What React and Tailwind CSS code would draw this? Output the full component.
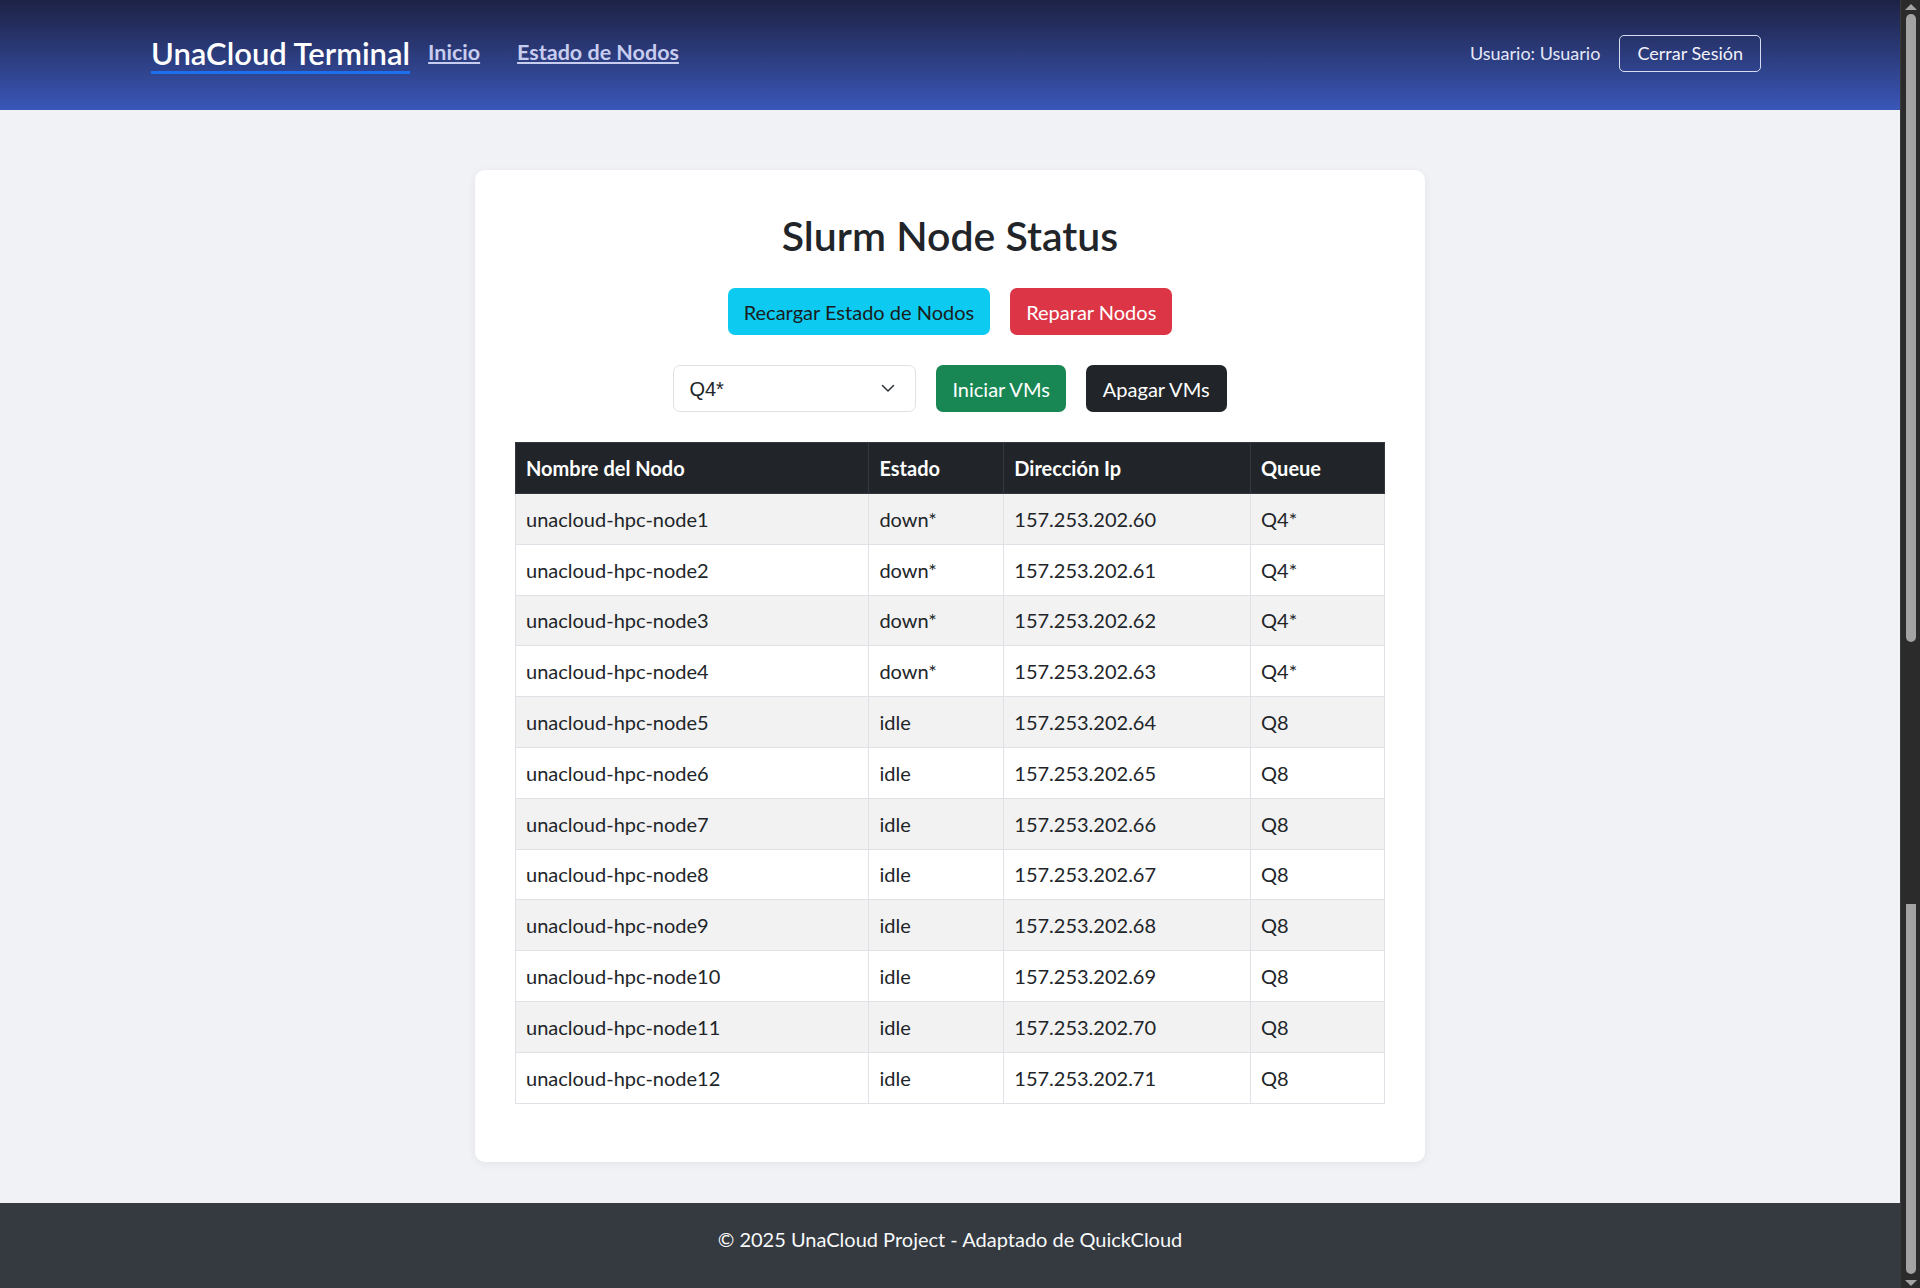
import React, { useState } from "react";

const nodes = [
    { name: "unacloud-hpc-node1", state: "down*", ip: "157.253.202.60", queue: "Q4*" },
    { name: "unacloud-hpc-node2", state: "down*", ip: "157.253.202.61", queue: "Q4*" },
    { name: "unacloud-hpc-node3", state: "down*", ip: "157.253.202.62", queue: "Q4*" },
    { name: "unacloud-hpc-node4", state: "down*", ip: "157.253.202.63", queue: "Q4*" },
    { name: "unacloud-hpc-node5", state: "idle", ip: "157.253.202.64", queue: "Q8" },
    { name: "unacloud-hpc-node6", state: "idle", ip: "157.253.202.65", queue: "Q8" },
    { name: "unacloud-hpc-node7", state: "idle", ip: "157.253.202.66", queue: "Q8" },
    { name: "unacloud-hpc-node8", state: "idle", ip: "157.253.202.67", queue: "Q8" },
    { name: "unacloud-hpc-node9", state: "idle", ip: "157.253.202.68", queue: "Q8" },
    { name: "unacloud-hpc-node10", state: "idle", ip: "157.253.202.69", queue: "Q8" },
    { name: "unacloud-hpc-node11", state: "idle", ip: "157.253.202.70", queue: "Q8" },
    { name: "unacloud-hpc-node12", state: "idle", ip: "157.253.202.71", queue: "Q8" },
];

const App = () => {
    const [queue, setQueue] = useState("Q4*");

    return (
        <div className="flex w-[1920px] h-[1288px] overflow-hidden font-['Segoe_UI','Lato',sans-serif] text-[20px] leading-[30px] text-[#212529]">
            <div className="flex flex-col w-[1900px] bg-[#f0f2f5]">
                {/* Navbar */}
                <header className="h-[110px] shrink-0 bg-gradient-to-b from-[#1d2245] to-[#3a57b9] flex items-center pl-[151px] pr-[139px] pb-[4px]">
                    <a className="text-[31px] leading-[40px] font-semibold text-white underline decoration-[#1e6ff0] decoration-[3px] underline-offset-[6px] mr-[18px]">
                        UnaCloud Terminal
                    </a>
                    <a className="text-[21.5px] font-bold text-[#c8cdf0] underline mr-[37px] -mt-[3px]">Inicio</a>
                    <a className="text-[21.5px] font-bold text-[#c8cdf0] underline -mt-[3px]">Estado de Nodos</a>
                    <div className="ml-auto flex items-center gap-[19px]">
                        <span className="text-[18px] text-[#e4e7f7]">Usuario: Usuario</span>
                        <button className="h-[37px] px-[17px] text-[18px] text-[#f1f2fa] border border-[#d8dcf0] rounded-[5px]">
                            Cerrar Sesión
                        </button>
                    </div>
                </header>

                {/* Main */}
                <main className="flex-1 flex justify-center pt-[60px]">
                    <div className="w-[950px] h-[992px] bg-white rounded-[10px] shadow-[0_2px_10px_rgba(0,0,0,0.06)] px-[40px] pt-[42px]">
                        <h2 className="text-center text-[41px] leading-[48px] font-semibold">Slurm Node Status</h2>

                        <div className="flex justify-center gap-[20px] mt-[28px]">
                            <button className="h-[47px] px-[16px] rounded-[7px] bg-[#0dcaf0] text-[#1a1d20]">
                                Recargar Estado de Nodos
                            </button>
                            <button className="h-[47px] px-[16px] rounded-[7px] bg-[#dc3545] text-white">
                                Reparar Nodos
                            </button>
                        </div>

                        <div className="flex justify-center gap-[20px] mt-[30px]">
                            <div className="relative w-[243px] h-[47px]">
                                <select
                                    value={queue}
                                    onChange={(e) => setQueue(e.target.value)}
                                    className="appearance-none w-full h-full border border-[#dee2e6] rounded-[7px] bg-white pl-[15px] text-[20px] font-['Liberation_Sans',sans-serif] text-[#212529]"
                                >
                                    <option>Q4*</option>
                                    <option>Q8</option>
                                </select>
                                <svg
                                    className="absolute right-[20px] top-[18px] pointer-events-none"
                                    width="16"
                                    height="10"
                                    viewBox="0 0 16 10"
                                    fill="none"
                                    stroke="#343a40"
                                    strokeWidth="1.6"
                                    strokeLinecap="round"
                                    strokeLinejoin="round"
                                >
                                    <path d="M2.5 2.5l5.5 5.5 5.5-5.5" />
                                </svg>
                            </div>
                            <button className="h-[47px] px-[16px] rounded-[7px] bg-[#198754] text-white">Iniciar VMs</button>
                            <button className="h-[47px] px-[17px] rounded-[7px] bg-[#212529] text-white">Apagar VMs</button>
                        </div>

                        {/* Table */}
                        <table className="w-[870px] mt-[30px] border-collapse">
                            <thead className="bg-[#212529] text-white">
                                <tr className="h-[51px]">
                                    <th className="w-[354px] text-left font-bold px-[10px] border border-[#32383e]">Nombre del Nodo</th>
                                    <th className="w-[135px] text-left font-bold px-[10px] border border-[#32383e]">Estado</th>
                                    <th className="w-[247px] text-left font-bold px-[10px] border border-[#32383e]">Dirección Ip</th>
                                    <th className="w-[134px] text-left font-bold px-[10px] border border-[#32383e]">Queue</th>
                                </tr>
                            </thead>
                            <tbody>
                                {nodes.map((n, i) => (
                                    <tr key={n.name} className={`h-[50.8px] ${i % 2 === 0 ? "bg-[#f2f2f2]" : "bg-white"}`}>
                                        <td className="px-[10px] border border-[#dee2e6]">{n.name}</td>
                                        <td className="px-[10px] border border-[#dee2e6]">{n.state}</td>
                                        <td className="px-[10px] border border-[#dee2e6]">{n.ip}</td>
                                        <td className="px-[10px] border border-[#dee2e6]">{n.queue}</td>
                                    </tr>
                                ))}
                            </tbody>
                        </table>
                    </div>
                </main>

                {/* Footer */}
                <footer className="h-[85px] shrink-0 bg-[#343a40] text-[#f8f9fa] text-center pt-[21px]">
                    © 2025 UnaCloud Project - Adaptado de QuickCloud
                </footer>
            </div>

            {/* Scrollbar */}
            <div className="relative w-[20px] h-full bg-[#2b2b2b] border-l border-[#3a3a3a]">
                <div className="absolute left-[4px] top-[4px] w-0 h-0 border-l-[6px] border-r-[6px] border-b-[6px] border-l-transparent border-r-transparent border-b-[#a3a3a3]" />
                <div className="absolute left-[5px] top-[14px] w-[10px] h-[628px] rounded-full bg-[#a3a3a3]" />
                <div className="absolute left-[5px] top-[904px] w-[10px] h-[370px] rounded-b-full bg-[#a3a3a3]" />
                <div className="absolute left-[4px] bottom-[2px] w-0 h-0 border-l-[6px] border-r-[6px] border-t-[6px] border-l-transparent border-r-transparent border-t-[#a3a3a3]" />
            </div>
        </div>
    );
};

export default App;
